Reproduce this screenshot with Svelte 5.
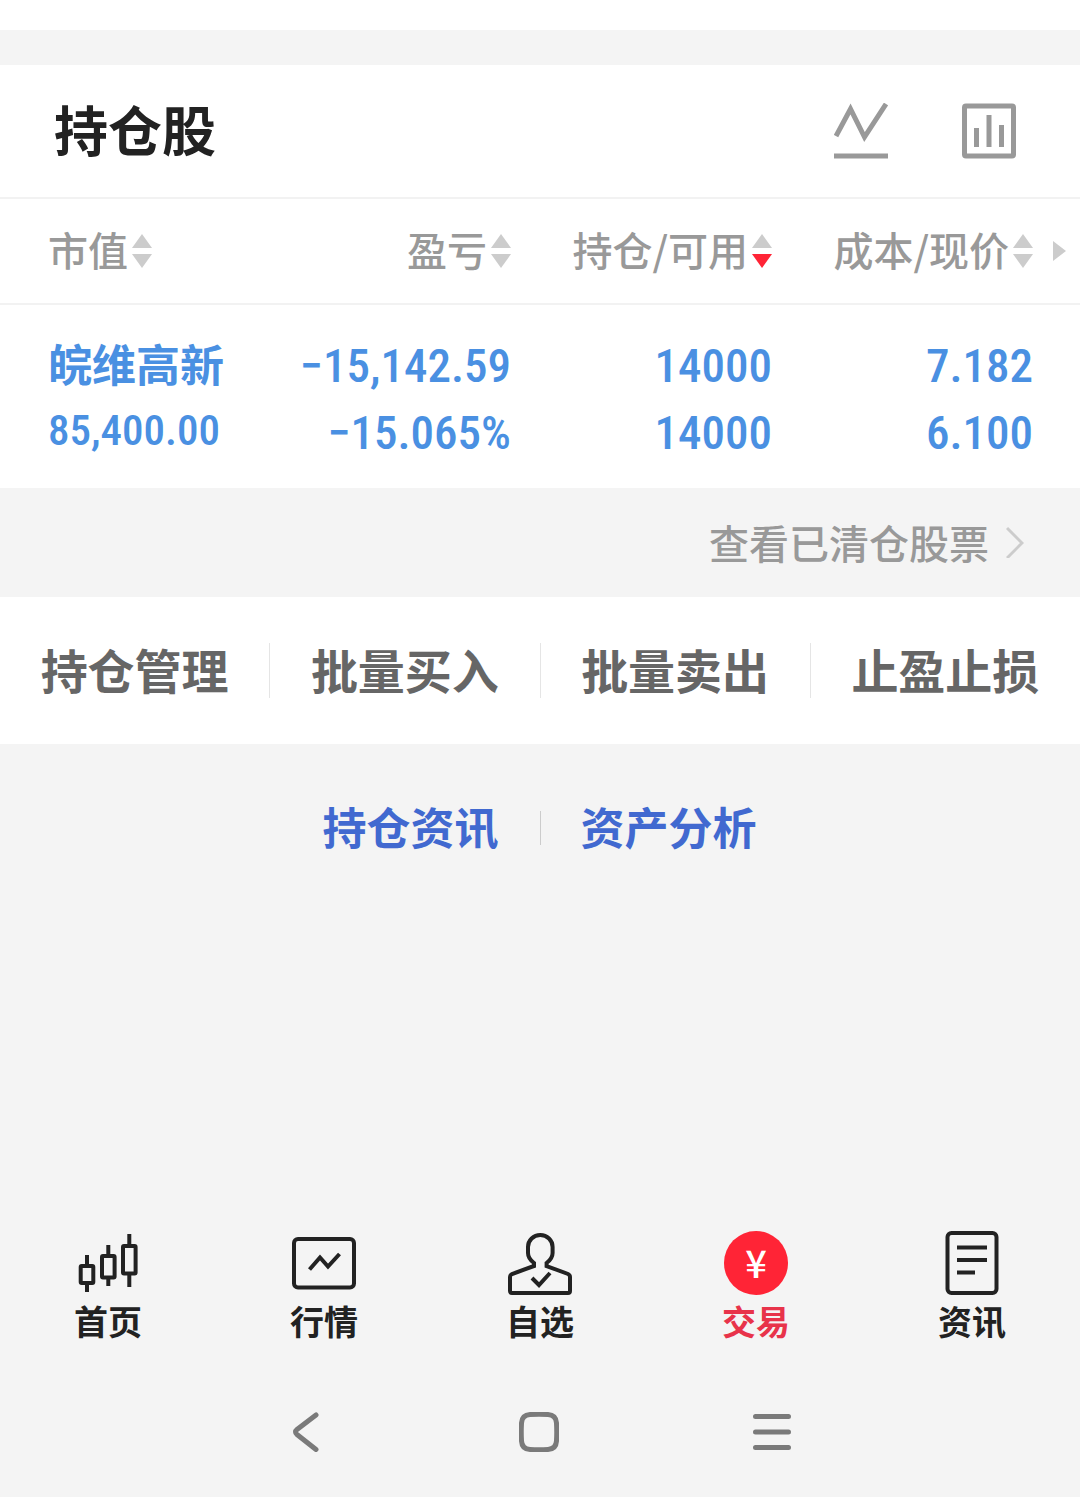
<script lang="ts">
    const columns = [
        { title: "市值", sort: "" },
        { title: "盈亏", sort: "" },
        { title: "持仓/可用", sort: "down" },
        { title: "成本/现价", sort: "" },
    ];

    const stocks = [
        { name: "皖维高新", value: "85,400.00", profit: "−15,142.59", rate: "−15.065%", held: "14000", usable: "14000", cost: "7.182", price: "6.100" },
    ];

    const actions = ["持仓管理", "批量买入", "批量卖出", "止盈止损"];

    const tabs = [
        { id: "home", label: "首页" },
        { id: "market", label: "行情" },
        { id: "watch", label: "自选" },
        { id: "trade", label: "交易" },
        { id: "news", label: "资讯" },
    ];

    let active = $state("trade");
</script>

<div class="page">
    <div class="strip"></div>

    <section class="holdings">
        <header>
            <h1>持仓股</h1>
            <div class="tools">
                <button aria-label="走势">
                    <svg width="54" height="56" viewBox="0 0 54 56" fill="none" stroke="#999" stroke-width="5">
                        <path d="M2 33L16.500 6l14 28L52 1M0 53h54" />
                    </svg>
                </button>
                <button aria-label="统计">
                    <svg width="54" height="56" viewBox="0 0 54 56" fill="none" stroke="#999" stroke-width="5">
                        <rect x="2.500" y="3" width="49" height="50" rx="1.500" />
                        <path d="M14.500 25v19M27 12v32M39.500 22v22" />
                    </svg>
                </button>
            </div>
        </header>

        <table>
            <thead>
                <tr>
                    {#each columns as col, i}
                        <th>
                            <button class="sort">
                                <span>{col.title}</span>
                                <svg width="20" height="34" viewBox="0 0 20 34">
                                    <path d="M10 0l10 14H0z" fill="#ccc" />
                                    <path d="M0 20h20L10 34z" fill={col.sort === "down" ? "#ff2436" : "#ccc"} />
                                </svg>
                            </button>
                            {#if i === columns.length - 1}
                                <svg class="more" width="13" height="20" viewBox="0 0 13 20"><path d="M0 0l13 10L0 20z" fill="#ccc" /></svg>
                            {/if}
                        </th>
                    {/each}
                </tr>
            </thead>
            <tbody>
                {#each stocks as s}
                    <tr>
                        <td><strong>{s.name}</strong><span class="value">{s.value}</span></td>
                        <td><span>{s.profit}</span><span>{s.rate}</span></td>
                        <td><span>{s.held}</span><span>{s.usable}</span></td>
                        <td><span>{s.cost}</span><span>{s.price}</span></td>
                    </tr>
                {/each}
            </tbody>
        </table>
    </section>

    <a class="cleared" href="#cleared">
        查看已清仓股票
        <svg width="18" height="32" viewBox="0 0 18 32" fill="none" stroke="#ccc" stroke-width="3"><path d="M1 2l15 15L1 32" /></svg>
    </a>

    <div class="actions">
        {#each actions as action}
            <button>{action}</button>
        {/each}
    </div>

    <div class="links">
        <a href="#news">持仓资讯</a>
        <a href="#analysis">资产分析</a>
    </div>

    <nav class="tabs">
        {#each tabs as tab}
            <button class:active={active === tab.id} onclick={() => (active = tab.id)}>
                <svg width="64" height="64" viewBox="0 0 64 64" fill="none" stroke="#222" stroke-width="4">
                    {#if tab.id === "home"}
                        <rect x="4.700" y="35" width="12.600" height="17" rx="1" />
                        <rect x="26" y="25" width="12.600" height="21.500" rx="1" />
                        <rect x="47" y="15" width="12.600" height="27.500" rx="1" />
                        <path d="M11 24v10M11 53v8M32.300 14v10M32.300 47v8M53.300 3v11M53.300 43v13" />
                    {:else if tab.id === "market"}
                        <rect x="2" y="8" width="60" height="48.500" rx="4" />
                        <path d="M17.500 38.500L28 26.500l8 9L47.500 23" />
                    {:else if tab.id === "watch"}
                        <path d="M2 60V46q0-2 2-3l22-8v-3c-4-3-6-6-6-10v-6a12.300 12 0 0 1 24.600 0v6c0 4-2 7-6 10v3l21.400 8q2 1 2 3v14q0 2-2 2H4q-2 0-2-2z" />
                        <path d="M24 47l7 7 11-12" />
                    {:else if tab.id === "trade"}
                        <circle cx="32" cy="32" r="32" fill="#ff2436" stroke="none" />
                        <text x="32" y="47" text-anchor="middle">¥</text>
                    {:else}
                        <rect x="7.500" y="2" width="49" height="60" rx="4" />
                        <path d="M17 16.500h30M17 29h30M17 41.500h18" />
                    {/if}
                </svg>
                {tab.label}
            </button>
        {/each}
    </nav>

    <div class="system">
        <button aria-label="返回">
            <svg width="40" height="40" viewBox="0 0 40 40" fill="none" stroke="#7a7a7a" stroke-width="5" stroke-linecap="round"><path d="M30 3L11 17.500q-3 2.500 0 5L30 37.500" /></svg>
        </button>
        <button aria-label="主屏幕">
            <svg width="40" height="40" viewBox="0 0 40 40" fill="none" stroke="#7a7a7a" stroke-width="5"><path d="M11 2.500Q20 2 29 2.500q8 .5 8.500 8.500.5 9 0 18-.5 8-8.500 8.500-9 .5-18 0-8-.5-8.500-8.500-.5-9 0-18Q3 3 11 2.500z" /></svg>
        </button>
        <button aria-label="最近任务">
            <svg width="40" height="40" viewBox="0 0 40 40" fill="none" stroke="#7a7a7a" stroke-width="5" stroke-linecap="round"><path d="M3.500 4.500h33M3.500 20h33M3.500 35.500h33" /></svg>
        </button>
    </div>
</div>

<style>
    :global(body) {
        margin: 0;
        background: #f4f4f4;
    }
    .page {
        display: flex;
        flex-direction: column;
        min-height: 100vh;
        font-family: "Noto Sans CJK SC", sans-serif;
        color: #222;
    }
    button {
        padding: 0;
        border: 0;
        background: none;
        color: inherit;
        font: inherit;
        cursor: pointer;
    }
    a {
        color: inherit;
        text-decoration: none;
    }
    svg {
        display: block;
        flex: none;
    }
    .strip {
        height: 30px;
        margin-bottom: 35px;
        background: #fff;
    }
    .holdings {
        background: #fff;
    }
    header {
        display: flex;
        align-items: center;
        justify-content: space-between;
        padding: 26px 64px 26px 54px;
        border-bottom: 2px solid #f2f2f2;
    }
    h1 {
        margin: 0;
        padding-bottom: 4px;
        font-size: 54px;
        line-height: 76px;
    }
    .tools {
        display: flex;
        gap: 74px;
    }
    table {
        width: 100%;
        table-layout: fixed;
        border-collapse: collapse;
    }
    th,
    td {
        width: 261px;
        padding: 0;
        text-align: right;
    }
    th {
        position: relative;
        height: 104px;
        border-bottom: 2px solid #f2f2f2;
        color: #999;
        font-size: 40px;
        font-weight: 500;
        line-height: 56px;
    }
    th:first-child,
    td:first-child {
        width: auto;
        padding-left: 48px;
        text-align: left;
    }
    th:last-child,
    td:last-child {
        padding-right: 47px;
    }
    .sort {
        display: inline-flex;
        align-items: center;
        gap: 4px;
        white-space: nowrap;
    }
    .sort span {
        padding-bottom: 4px;
    }
    .more {
        position: absolute;
        top: 42px;
        right: 14px;
    }
    td {
        padding-top: 27px;
        padding-bottom: 22px;
        color: #4a90e2;
        font-family: "Roboto Condensed", "Noto Sans CJK SC", sans-serif;
        font-size: 47px;
        font-weight: 500;
        line-height: 67px;
        vertical-align: top;
    }
    td:first-child {
        padding-top: 25px;
    }
    td strong,
    td span {
        display: block;
    }
    td strong {
        font-family: "Noto Sans CJK SC", sans-serif;
        font-size: 44px;
    }
    td .value {
        font-size: 43px;
    }
    .cleared {
        display: flex;
        align-items: center;
        justify-content: flex-end;
        gap: 17px;
        padding: 24px 56px 25px;
        color: #999;
        font-size: 40px;
        font-weight: 500;
        line-height: 60px;
    }
    .actions {
        display: flex;
        padding: 46px 0;
        background: #fff;
    }
    .actions button {
        flex: 1;
        padding-bottom: 4px;
        border-right: 1px solid #e5e5e5;
        color: #666;
        font-size: 47px;
        font-weight: 700;
        line-height: 51px;
    }
    .actions button:last-child {
        border-right: 0;
    }
    .links {
        display: flex;
        justify-content: center;
        padding: 67px 0;
        color: #4169d0;
        font-size: 44px;
        font-weight: 700;
        line-height: 30px;
    }
    .links a {
        padding: 0 41px 4px 40px;
    }
    .links a:first-child {
        border-right: 1px solid #ccc;
    }
    .tabs {
        display: flex;
        margin-top: auto;
    }
    .tabs button {
        display: flex;
        flex: 1;
        flex-direction: column;
        align-items: center;
        gap: 6px;
        font-size: 34px;
        font-weight: 700;
        line-height: 40px;
    }
    .tabs .active {
        color: #e8334a;
    }
    .tabs text {
        fill: #fff;
        stroke: none;
        font-size: 38px;
        font-weight: 500;
    }
    .system {
        display: flex;
        padding: 71px 191px 45px 189px;
    }
    .system button {
        display: flex;
        flex: 1;
        justify-content: center;
    }
</style>
